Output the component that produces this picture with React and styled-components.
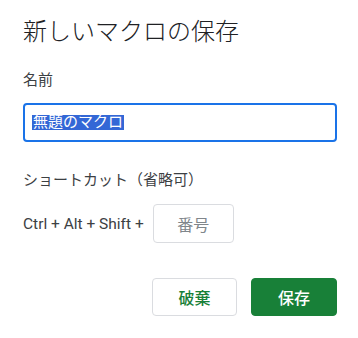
import React from "react";
import styled, { createGlobalStyle } from "styled-components";

const GlobalStyle = createGlobalStyle`
  body {
    margin: 0;
    background: #fff;
    font-family: Roboto, "Noto Sans CJK JP", sans-serif;
    color: #202124;
  }
`;

const Dialog = styled.div`
  width: 358px;
  height: 338px;
  box-sizing: border-box;
  padding: 16px 21px 0 23px;
  display: flex;
  flex-direction: column;
`;

const Title = styled.h1`
  margin: 0;
  font-size: 24px;
  line-height: 32px;
  font-weight: 300;
  color: #202124;
`;

const Label = styled.div`
  margin-top: ${(p) => p.$top}px;
  font-size: 15px;
  line-height: 20px;
  color: #3c4043;
`;

const NameBox = styled.div`
  margin-top: 13px;
  height: 39px;
  box-sizing: border-box;
  border: 2px solid #1a73e8;
  border-radius: 4px;
  padding: 0 0 0 7px;
  display: flex;
  align-items: center;
  font-size: 15px;
`;

const Selected = styled.span`
  background: #3367d6;
  color: #fff;
  line-height: 15px;
  padding: 0 1px;
`;

const ShortcutRow = styled.div`
  margin-top: 14px;
  display: flex;
  align-items: center;
  gap: 9px;
  font-size: 15.5px;
  color: #3c4043;
`;

const KeyBox = styled.div`
  width: 81px;
  height: 39px;
  box-sizing: border-box;
  border: 1px solid #dadce0;
  border-radius: 4px;
  display: flex;
  align-items: center;
  justify-content: center;
  font-size: 16px;
  color: #80868b;
`;

const Actions = styled.div`
  margin-top: 35px;
  display: flex;
  justify-content: flex-end;
  gap: 14px;
`;

const Button = styled.button`
  width: ${(p) => p.$w}px;
  height: 38px;
  box-sizing: border-box;
  border-radius: 4px;
  font-family: inherit;
  font-size: 16px;
  font-weight: 500;
  cursor: pointer;
  border: 1px solid ${(p) => (p.$primary ? "#188038" : "#dadce0")};
  background: ${(p) => (p.$primary ? "#188038" : "#fff")};
  color: ${(p) => (p.$primary ? "#fff" : "#188038")};
`;

export default function App() {
  return (
    <>
      <GlobalStyle />
      <Dialog>
        <Title>新しいマクロの保存</Title>
        <Label $top={22}>名前</Label>
        <NameBox>
          <Selected>無題のマクロ</Selected>
        </NameBox>
        <Label $top={28}>ショートカット（省略可）</Label>
        <ShortcutRow>
          <span>Ctrl + Alt + Shift +</span>
          <KeyBox>番号</KeyBox>
        </ShortcutRow>
        <Actions>
          <Button $w={85}>破棄</Button>
          <Button $w={86} $primary>保存</Button>
        </Actions>
      </Dialog>
    </>
  );
}
